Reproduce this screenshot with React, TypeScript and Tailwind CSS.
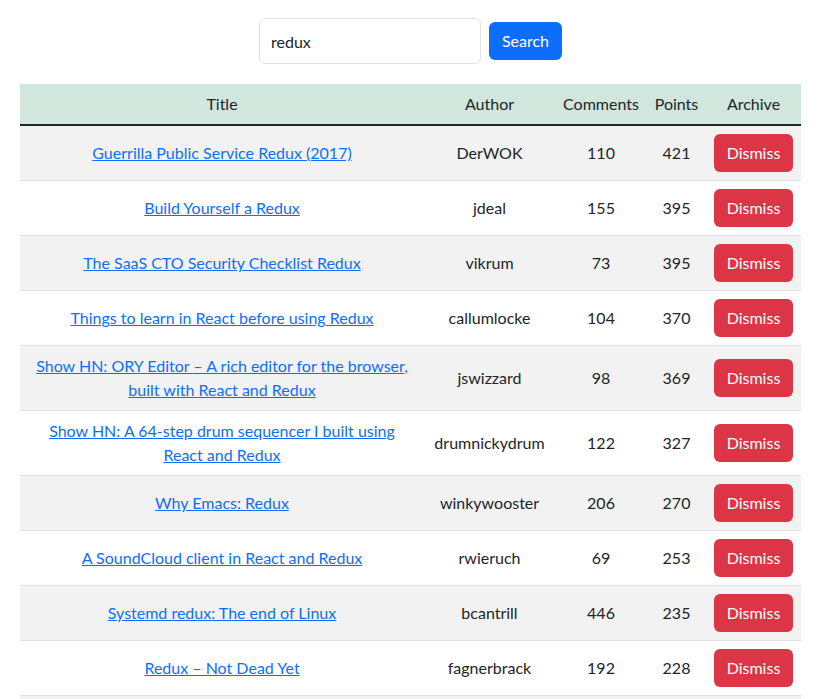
import React, { useState } from "react";

interface Story {
  title: string;
  author: string;
  comments: number;
  points: number;
}

const stories: Story[] = [
  { title: "Guerrilla Public Service Redux (2017)", author: "DerWOK", comments: 110, points: 421 },
  { title: "Build Yourself a Redux", author: "jdeal", comments: 155, points: 395 },
  { title: "The SaaS CTO Security Checklist Redux", author: "vikrum", comments: 73, points: 395 },
  { title: "Things to learn in React before using Redux", author: "callumlocke", comments: 104, points: 370 },
  {
    title: "Show HN: ORY Editor – A rich editor for the browser, built with React and Redux",
    author: "jswizzard",
    comments: 98,
    points: 369,
  },
  {
    title: "Show HN: A 64-step drum sequencer I built using React and Redux",
    author: "drumnickydrum",
    comments: 122,
    points: 327,
  },
  { title: "Why Emacs: Redux", author: "winkywooster", comments: 206, points: 270 },
  { title: "A SoundCloud client in React and Redux", author: "rwieruch", comments: 69, points: 253 },
  { title: "Systemd redux: The end of Linux", author: "bcantrill", comments: 446, points: 235 },
  { title: "Redux – Not Dead Yet", author: "fagnerbrack", comments: 192, points: 228 },
  { title: "Redux Toolkit 1.0", author: "acemarke", comments: 88, points: 221 },
];

export default function App() {
  const [query, setQuery] = useState("redux");
  const [list, setList] = useState(stories);

  return (
    <div
      className="h-[699px] overflow-hidden bg-white text-[#212529] text-base leading-6"
      style={{ fontFamily: "Lato, 'Open Sans', sans-serif" }}
    >
      {/* search form */}
      <form
        className="pt-[18px] flex items-center justify-center gap-2"
        onSubmit={(e) => e.preventDefault()}
      >
        <input
          value={query}
          onChange={(e) => setQuery(e.target.value)}
          className="w-[222px] h-[46px] px-[11px] rounded-md border border-[#dee2e6] text-base text-[#212529] outline-none"
        />
        <button
          type="submit"
          className="w-[73px] h-[38px] rounded-md bg-[#0d6efd] text-white text-base"
        >
          Search
        </button>
      </form>

      <div className="mx-5 mt-5">
        <table className="w-full table-fixed border-collapse text-center">
          <colgroup>
            <col className="w-[404px]" />
            <col className="w-[131px]" />
            <col className="w-[92px]" />
            <col className="w-[59px]" />
            <col className="w-[95px]" />
          </colgroup>
          <thead>
            <tr className="bg-[#d1e7dd] border-b-2 border-[#212529]">
              <th className="font-normal px-2 py-2">Title</th>
              <th className="font-normal px-2 py-2">Author</th>
              <th className="font-normal px-1 py-2">Comments</th>
              <th className="font-normal px-1 py-2">Points</th>
              <th className="font-normal px-2 py-2">Archive</th>
            </tr>
          </thead>
          <tbody>
            {list.map((s, i) => (
              <tr
                key={s.title}
                className={`border-b border-[#dee2e6] ${i % 2 === 0 ? "bg-[#f2f2f2]" : "bg-white"}`}
              >
                <td className="px-2 py-2 align-middle">
                  <a href="#" className="text-[#0d6efd] underline">
                    {s.title}
                  </a>
                </td>
                <td className="px-2 py-2 align-middle">{s.author}</td>
                <td className="px-1 py-2 align-middle">{s.comments}</td>
                <td className="px-1 py-2 align-middle">{s.points}</td>
                <td className="px-2 py-2 align-middle">
                  <button
                    onClick={() => setList(list.filter((x) => x.title !== s.title))}
                    className="w-[79px] h-[38px] rounded-md bg-[#dc3545] text-white"
                  >
                    Dismiss
                  </button>
                </td>
              </tr>
            ))}
          </tbody>
        </table>
      </div>
    </div>
  );
}
